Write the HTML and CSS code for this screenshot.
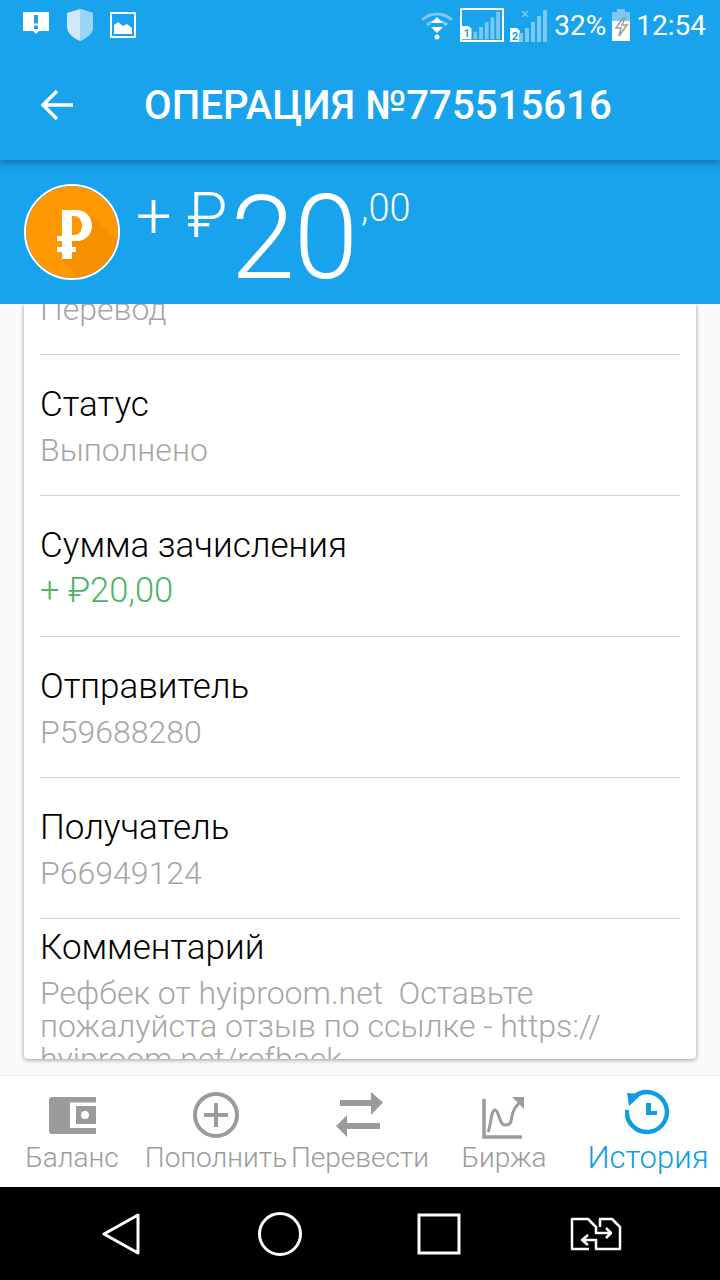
FILE: index.html
```html
<!DOCTYPE html>
<html>
<head>
  <meta name="viewport" content="width=device-width, initial-scale=1.0">
  <title>Операция</title>
  <link rel="stylesheet" href="styles.css">
</head>
<body>
  <div class="app">

    <!-- Top: status bar and title -->
    <header class="topbar">
      <div class="status">
        <div class="status-left">
          <svg width="28" height="28" viewBox="0 0 28 28"><path fill="#fff" d="M1 1h26v19h-10l-3 3-3-3H1z"/><path fill="#18a3ec" d="M12 4h4v8.500h-4zM12 14.500h4v3.500h-4z"/></svg>
          <svg width="28" height="32" viewBox="0 0 28 32"><path fill="#cfe9fb" d="M14 0l13 4v14c0 6-6 11-13 14C7 29 1 24 1 18V4z"/><path fill="#9bd6f8" d="M14 0l13 4v14c0 6-6 11-13 14z"/></svg>
          <svg width="26" height="26" viewBox="0 0 26 26"><path fill="none" stroke="#fff" stroke-width="2" d="M1 1h24v24H1z"/><path fill="#fff" d="M4 22v-9l4-3 5 4 4-2 5 4v6z"/></svg>
        </div>
        <div class="status-right">
          <svg width="34" height="30" viewBox="0 0 34 30"><path fill="none" stroke="#7cc8f5" stroke-width="3" d="M2 10c9-8 21-8 30 0"/><path fill="none" stroke="#7cc8f5" stroke-width="3" d="M7 15c6-5 14-5 20 0"/><path fill="#fff" d="M17 7l6 6H11zM11 17h12l-6 6z"/><path fill="#18a3ec" d="M11 13h12v3H11z"/><circle cx="17" cy="27" r="2.500" fill="#fff"/></svg>
          <div class="sim-box">
            <svg width="40" height="30" viewBox="0 0 40 30"><path fill="#fff" d="M0 16h7l3 3v11H0z"/><text class="sim-num" x="5" y="28" text-anchor="middle">1</text><path fill="#7cc8f5" d="M12 22h4v8h-4zM18 17h4v13h-4zM24 12h4v18h-4zM30 7h4v23h-4zM36 1h4v29h-4z"/></svg>
          </div>
          <svg class="sim-two" width="38" height="34" viewBox="0 0 38 34"><path fill="#fff" d="M0 20h7l3 3v11H0z"/><text class="sim-num" x="5" y="32" text-anchor="middle">2</text><path fill="#7cc8f5" d="M9 25h4v9H9zM15 20h4v14h-4zM21 14h4v20h-4zM27 8h4v26h-4zM33 2h4v32h-4z"/><path fill="none" stroke="#7cc8f5" stroke-width="1.500" d="M12 3l6 6m0-6l-6 6"/></svg>
          <span class="status-text">32%</span>
          <svg width="18" height="32" viewBox="0 0 18 32"><path fill="#7cc8f5" d="M5 0h8v3h5v9H0V3h5z"/><path fill="#fff" d="M0 12h18v20H0z"/><path fill="none" stroke="#9a9a9a" stroke-width="1.500" d="M11 9L4 19h5l-2 8 8-11h-5l3-7z"/></svg>
          <span class="status-text">12:54</span>
        </div>
      </div>
      <div class="appbar">
        <svg class="back" width="34" height="32" viewBox="0 0 34 32"><path fill="none" stroke="#fff" stroke-width="3.500" d="M33 16H3M17 2L3 16l14 14"/></svg>
        <h1>ОПЕРАЦИЯ №775515616</h1>
      </div>
    </header>

    <!-- Amount -->
    <div class="amount">
      <div class="coin">
        <svg width="92" height="92" viewBox="0 0 92 92">
          <circle cx="46" cy="46" r="46" fill="#ff9800"/>
          <path fill="#f79000" d="M66 30l25 25c-4 20-20 35-41 36L36 72l10-18z"/>
          <path fill="#fff" fill-rule="evenodd" d="M36 24h14c10 0 16 7 16 16 0 8-6 15-15 15h-5v6h4v5h-4v7H36v-7h-5v-5h5v-6h-5v-5h5zm10 6v19h2c5 0 8-4 8-9 0-6-3-10-8-10z"/>
        </svg>
      </div>
      <span class="sign">+ ₽</span>
      <span class="whole">20</span>
      <span class="cents">,00</span>
    </div>

    <!-- Operation details -->
    <main class="content">
      <div class="card">
        <div class="row row-cut">
          <div class="sub">Перевод</div>
        </div>
        <div class="row">
          <div class="label">Статус</div>
          <div class="sub">Выполнено</div>
        </div>
        <div class="row">
          <div class="label">Сумма зачисления</div>
          <div class="sub green">+ ₽20,00</div>
        </div>
        <div class="row">
          <div class="label">Отправитель</div>
          <div class="sub">P59688280</div>
        </div>
        <div class="row">
          <div class="label">Получатель</div>
          <div class="sub">P66949124</div>
        </div>
        <div class="row row-last">
          <div class="label">Комментарий</div>
          <div class="sub comment">Рефбек от hyiproom.net&nbsp; Оставьте пожалуйста отзыв по ссылке - https://<br>hyiproom.net/refback</div>
        </div>
      </div>
    </main>

    <!-- Bottom tabs -->
    <nav class="tabs">
      <div class="tab">
        <div class="tab-icon">
          <svg width="47" height="37" viewBox="0 0 47 37"><path fill="#9b9b9b" d="M3 0h44v5.500H21V31h26v6H3c-2 0-3-1-3-3V3c0-2 1-3 3-3z"/><path fill="#9b9b9b" fill-rule="evenodd" d="M27 9h20v18H27zm9 5a4 4 0 1 0 0 8 4 4 0 0 0 0-8z"/></svg>
        </div>
        <span>Баланс</span>
      </div>
      <div class="tab">
        <div class="tab-icon">
          <svg width="46" height="46" viewBox="0 0 46 46"><circle cx="23" cy="23" r="21" fill="none" stroke="#9b9b9b" stroke-width="4"/><path fill="#9b9b9b" d="M21 11h4v10h10v4H25v10h-4V25H11v-4h10z"/></svg>
        </div>
        <span>Пополнить</span>
      </div>
      <div class="tab">
        <div class="tab-icon">
          <svg width="48" height="46" viewBox="0 0 48 46"><path fill="#9b9b9b" d="M4 8h31V0l12 10.500L35 23v-9H4zM44 31H11v-8L0 34l11 11v-8h33z"/></svg>
        </div>
        <span>Перевести</span>
      </div>
      <div class="tab">
        <div class="tab-icon icon-low">
          <svg width="44" height="44" viewBox="0 0 44 44"><path fill="none" stroke="#9b9b9b" stroke-width="3.500" d="M2 3v38h38"/><path fill="none" stroke="#9b9b9b" stroke-width="3" d="M6 36C9 30 9 14 13 14s4 15 10 15 6-3 7-9 4-10 8-14"/><path fill="#9b9b9b" d="M30 1h12v12z"/></svg>
        </div>
        <span>Биржа</span>
      </div>
      <div class="tab tab-active">
        <div class="tab-icon icon-high">
          <svg width="46" height="46" viewBox="0 0 46 46"><path fill="none" stroke="#0d9ce6" stroke-width="4.500" d="M10 7a20 20 0 1 1-8 14"/><path fill="#0d9ce6" d="M2 4l15 1L4 17zM21 14h5v8h6v4H21z"/></svg>
        </div>
        <span>История</span>
      </div>
    </nav>

    <!-- System buttons -->
    <footer class="sysbar">
      <svg width="40" height="42" viewBox="0 0 40 42"><path fill="none" stroke="#fff" stroke-width="3" stroke-linejoin="round" d="M37 2v38L3 21z"/></svg>
      <svg width="46" height="46" viewBox="0 0 46 46"><circle cx="23" cy="23" r="20.500" fill="none" stroke="#fff" stroke-width="3"/></svg>
      <svg width="44" height="42" viewBox="0 0 44 42"><path fill="none" stroke="#fff" stroke-width="3" d="M2 2h40v38H2z"/></svg>
      <svg width="52" height="34" viewBox="0 0 52 34"><path fill="none" stroke="#fff" stroke-width="2.500" stroke-linejoin="round" d="M19 32H2V2h16l8 8v6h14M30 10V2h12l8 8v22H26V23H12M36 11l5 5-5 5M18 18l-6 5 6 5"/></svg>
    </footer>
  </div>
</body>
</html>
```

FILE: styles.css
```css
* {
  box-sizing: border-box;
  margin: 0;
  padding: 0;
}

body {
  font-family: Roboto, "Noto Sans", sans-serif;
  width: 720px;
  height: 1280px;
  overflow: hidden;
  background-color: #fafafa;
}

.app {
  display: flex;
  flex-direction: column;
  height: 1280px;
}

/* Top */
.topbar {
  height: 160px;
  flex: none;
  background: #18a3ec;
  color: white;
  position: relative;
  z-index: 2;
  box-shadow: 0 3px 7px rgba(0, 50, 90, 0.45);
}

.status {
  height: 50px;
  display: flex;
  justify-content: space-between;
  align-items: center;
  padding: 0 14px 0 22px;
}

.status-left {
  display: flex;
  align-items: center;
  gap: 16px;
}

.status-right {
  display: flex;
  align-items: center;
  gap: 6px;
}

.status-text {
  font-size: 28px;
  line-height: 32px;
  padding-top: 2px;
}

.sim-box {
  width: 44px;
  height: 34px;
  border: 2px solid white;
  display: flex;
  align-items: flex-end;
}

.sim-box svg {
  width: 38px;
}

.sim-num {
  font-family: Roboto, sans-serif;
  font-size: 11px;
  font-weight: 700;
  fill: #18a3ec;
}

.appbar {
  height: 110px;
  display: flex;
  align-items: center;
  padding-left: 40px;
}

.back {
  flex: none;
}

.appbar h1 {
  font-size: 40.2px;
  font-weight: 500;
  margin-left: 70px;
  white-space: nowrap;
}

/* Amount */
.amount {
  height: 144px;
  flex: none;
  background: #18a3ec;
  color: white;
  display: flex;
  align-items: flex-start;
  padding: 24px 0 0 24px;
  position: relative;
  z-index: 1;
  font-weight: 300;
}

.coin {
  width: 96px;
  height: 96px;
  border: 2px solid white;
  border-radius: 50%;
  overflow: hidden;
  flex: none;
}

.coin svg {
  display: block;
}

.sign {
  font-size: 63px;
  line-height: 64px;
  margin-left: 16px;
}

.whole {
  font-size: 116px;
  line-height: 108px;
  margin-left: 3px;
  letter-spacing: -1px;
}

.cents {
  font-size: 38px;
  line-height: 48px;
  margin-left: 4px;
}

/* Card */
.content {
  height: 771px;
  flex: none;
  overflow: hidden;
  padding: 0 24px;
}

.card {
  display: flow-root;
  height: 755px;
  overflow: hidden;
  background: white;
  border-radius: 0 0 4px 4px;
  box-shadow: 0 1px 4px rgba(0, 0, 0, 0.4);
  padding: 0 16px;
}

.row {
  height: 141px;
  padding-top: 31px;
  border-bottom: 1px solid #d4d4d4;
}

.row-cut {
  display: flow-root;
  height: 51px;
  padding-top: 0;
  overflow: hidden;
}

.row-cut .sub {
  margin-top: -11px;
}

.row-last {
  height: auto;
  padding-top: 10px;
  border-bottom: none;
}

.label {
  font-size: 35px;
  line-height: 38px;
  color: #000;
  font-weight: 300;
}

.sub {
  font-size: 32px;
  line-height: 33px;
  margin-top: 10px;
  color: #a6a6a6;
  font-weight: 300;
}

.green {
  font-size: 34.5px;
  color: #4cb464;
  margin-top: 9px;
}

/* Tabs */
.tabs {
  height: 112px;
  flex: none;
  display: grid;
  grid-template-columns: repeat(5, 144px);
  background: white;
  border-top: 1px solid #eeeeee;
}

.tab {
  display: flex;
  flex-direction: column;
  align-items: center;
  padding-top: 14px;
  font-size: 28px;
  line-height: 36px;
  color: #9b9b9b;
  font-weight: 300;
  white-space: nowrap;
}

.tab-icon {
  height: 50px;
  display: flex;
  align-items: center;
}

.icon-low {
  padding-top: 6px;
}

.icon-high {
  padding-bottom: 6px;
}

.tab-active {
  color: #0d9ce6;
  font-size: 31px;
}

/* System buttons */
.sysbar {
  height: 93px;
  flex: none;
  background: black;
  display: grid;
  grid-template-columns: 159px 159px 159px 155px;
  justify-items: center;
  align-items: center;
  padding-left: 41px;
}
```
